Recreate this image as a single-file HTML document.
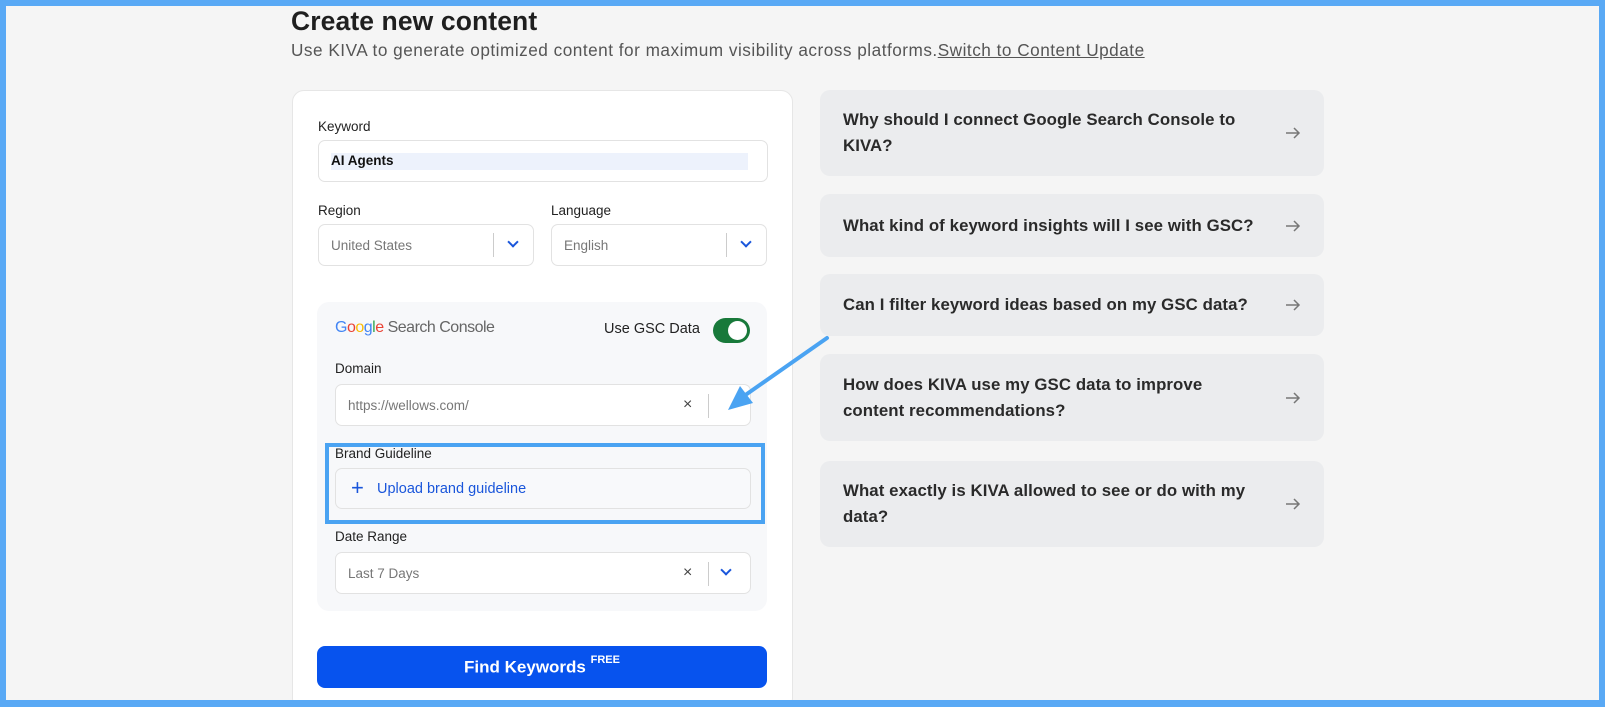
<!DOCTYPE html>
<html><head><meta charset="utf-8"><style>
*{box-sizing:border-box;margin:0;padding:0}
html,body{width:1605px;height:707px;overflow:hidden}
body{background:#59a9f5;font-family:"Liberation Sans",sans-serif;position:relative}
.page{position:absolute;left:6px;top:6px;width:1593px;height:694px;background:#f5f5f5;overflow:hidden}
.a{position:absolute}
h1{position:absolute;left:285px;top:0px;font-size:26.5px;font-weight:bold;color:#1f1f1f;letter-spacing:0.1px}
.sub{left:285px;top:34px;font-size:17.2px;color:#555;letter-spacing:0.5px}
.sub u{color:#555}
.card{left:286px;top:84px;width:501px;height:620px;background:#fff;border:1px solid #e6e6e6;border-radius:12px}
.lbl{font-size:13.5px;color:#222}
.inp{border:1px solid #e2e2e2;border-radius:7px;background:#fff;font-size:13.5px;color:#777}
.gsc{left:311px;top:296px;width:450px;height:309px;background:#f7f8fa;border-radius:12px}
.faq{left:814px;width:504px;background:#ebecee;border-radius:10px;font-size:16.8px;font-weight:bold;color:#2a2a2a;line-height:26px;padding-left:23px;display:flex;align-items:center;letter-spacing:0.1px}
.arr{position:absolute;right:23px;top:50%;margin-top:-8px}
.chev{position:absolute;width:8px;height:8px;border-right:2px solid #1a56db;border-bottom:2px solid #1a56db;transform:rotate(45deg)}
.sep{position:absolute;width:1px;height:24px;background:#ccc}
</style></head><body><div class="page">
<h1>Create new content</h1>
<div class="a sub">Use KIVA to generate optimized content for maximum visibility across platforms.<u>Switch to Content Update</u></div>
<div class="a card"></div>
<div class="a lbl" style="left:312px;top:113px">Keyword</div>
<div class="a inp" style="left:312px;top:134px;width:450px;height:42px"></div>
<div class="a" style="left:325px;top:147px;width:417px;height:17px;background:#edf2fc"></div>
<div class="a" style="left:325px;top:147px;font-size:13.5px;color:#111;font-weight:bold">AI Agents</div>
<div class="a lbl" style="left:312px;top:197px">Region</div>
<div class="a lbl" style="left:545px;top:197px">Language</div>
<div class="a inp" style="left:312px;top:218px;width:216px;height:42px"><span class="a" style="left:12px;top:13px">United States</span><div class="sep" style="left:174px;top:8px"></div><div class="chev" style="left:190px;top:13px"></div></div>
<div class="a inp" style="left:545px;top:218px;width:216px;height:42px"><span class="a" style="left:12px;top:13px">English</span><div class="sep" style="left:174px;top:8px"></div><div class="chev" style="left:190px;top:13px"></div></div>
<div class="a gsc"></div>
<div class="a" style="left:329px;top:313px;font-size:16px;letter-spacing:-0.5px"><span style="color:#4285f4">G</span><span style="color:#ea4335">o</span><span style="color:#fbbc05">o</span><span style="color:#4285f4">g</span><span style="color:#34a853">l</span><span style="color:#ea4335">e</span> <span style="color:#666">Search Console</span></div>
<div class="a" style="left:598px;top:315px;font-size:14.5px;color:#222">Use GSC Data</div>
<div class="a" style="left:707px;top:312px;width:37px;height:25px;border-radius:13px;background:#18793a"><div class="a" style="right:3px;top:3px;width:19px;height:19px;border-radius:50%;background:#fff"></div></div>
<div class="a lbl" style="left:329px;top:355px">Domain</div>
<div class="a inp" style="left:329px;top:378px;width:416px;height:42px"><span class="a" style="left:12px;top:13px">https://wellows.com/</span><span class="a" style="left:347px;top:11px;color:#444;font-size:16px">×</span><div class="sep" style="left:372px;top:9px"></div></div>
<div class="a" style="left:319px;top:437px;width:440px;height:81px;border:4px solid #4aa3f2"></div>
<div class="a lbl" style="left:329px;top:440px">Brand Guideline</div>
<div class="a inp" style="left:329px;top:462px;width:416px;height:41px;background:#f8f9fb"><span class="a" style="left:15px;top:8px;color:#1a56db;font-size:22px;line-height:22px">+</span><span class="a" style="left:41px;top:12px;color:#1a56db;font-size:14.5px">Upload brand guideline</span></div>
<div class="a lbl" style="left:329px;top:523px">Date Range</div>
<div class="a inp" style="left:329px;top:546px;width:416px;height:42px"><span class="a" style="left:12px;top:13px">Last 7 Days</span><span class="a" style="left:347px;top:11px;color:#444;font-size:16px">×</span><div class="sep" style="left:372px;top:9px"></div><div class="chev" style="left:386px;top:13px"></div></div>
<div class="a" style="left:311px;top:640px;width:450px;height:42px;background:#0753ee;border-radius:8px;color:#fff;text-align:center;font-size:17px;font-weight:bold;padding-top:11px">Find Keywords <sup style="font-size:11px;position:relative;top:-3px">FREE</sup></div>
<div class="a faq" style="top:84px;height:86px">Why should I connect Google Search Console to<br>KIVA?<svg class="arr" width="16" height="16" viewBox="0 0 16 16"><path d="M1 8H14M9 3L14 8L9 13" fill="none" stroke="#777" stroke-width="1.5"/></svg></div>
<div class="a faq" style="top:188px;height:63px">What kind of keyword insights will I see with GSC?<svg class="arr" width="16" height="16" viewBox="0 0 16 16"><path d="M1 8H14M9 3L14 8L9 13" fill="none" stroke="#777" stroke-width="1.5"/></svg></div>
<div class="a faq" style="top:268px;height:62px">Can I filter keyword ideas based on my GSC data?<svg class="arr" width="16" height="16" viewBox="0 0 16 16"><path d="M1 8H14M9 3L14 8L9 13" fill="none" stroke="#777" stroke-width="1.5"/></svg></div>
<div class="a faq" style="top:348px;height:87px">How does KIVA use my GSC data to improve<br>content recommendations?<svg class="arr" width="16" height="16" viewBox="0 0 16 16"><path d="M1 8H14M9 3L14 8L9 13" fill="none" stroke="#777" stroke-width="1.5"/></svg></div>
<div class="a faq" style="top:455px;height:86px">What exactly is KIVA allowed to see or do with my<br>data?<svg class="arr" width="16" height="16" viewBox="0 0 16 16"><path d="M1 8H14M9 3L14 8L9 13" fill="none" stroke="#777" stroke-width="1.5"/></svg></div>
<svg class="a" style="left:0;top:0" width="1593" height="694"><line x1="821" y1="332" x2="738" y2="390" stroke="#4aa3f2" stroke-width="4" stroke-linecap="round"/><polygon points="722,404 734,380 747,397" fill="#4aa3f2"/></svg>
</div></body></html>
